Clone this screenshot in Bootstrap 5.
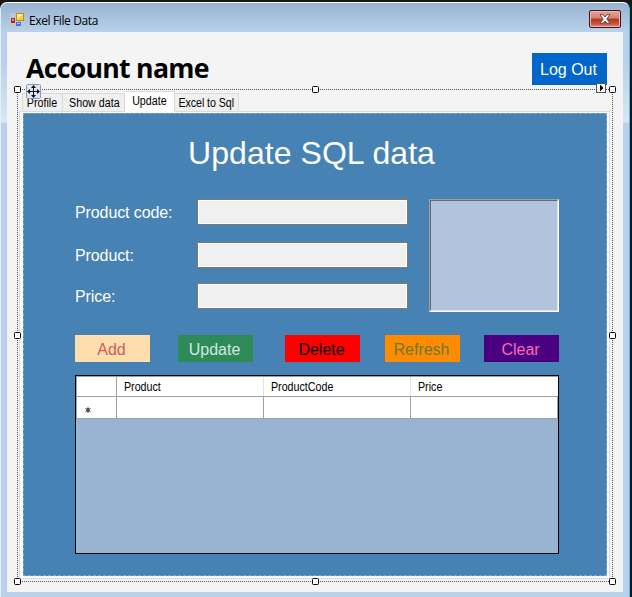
<!DOCTYPE html>
<html lang="en">
<head>
<meta charset="utf-8">
<title>Exel File Data</title>
<link rel="stylesheet" href="https://cdn.jsdelivr.net/npm/bootstrap@5.3.0/dist/css/bootstrap.min.css">
<style>
html,body{height:597px;overflow:hidden}
body{background:#171717;font-family:"Liberation Sans",Arial,sans-serif;font-size:16px;line-height:18px;padding:2px 2px 0 0}
.win{height:595px;width:630px;border-radius:7px 7px 0 0;border-top:1px solid #fff;border-right:1px solid #4cc3dc;border-left:1px solid #e4eef8;
 background:linear-gradient(#98b3d1,#b9d1ea 29px,#b9d1ea 60px,#d9e7f5 119px,#b9d1ea 120px,#b9d1ea);padding:0 6px 5px}
.titlebar{height:29px;padding:0 2px 0 3px}
.caption-text{font:12px/16px "Open Sans","Noto Sans",sans-serif;color:#000;margin:6px 0 0 5px;letter-spacing:-.38px}
.closer{width:32px;height:18px;padding:0;border:1px solid #43141a;border-radius:2px;margin-top:7px;
 background:linear-gradient(#e6a495,#d5816f 45%,#b5331c 50%,#c4553e 80%,#d99280);box-shadow:inset 0 0 0 1px #e9b9ad;line-height:0}
.client{height:560px;background:#f4f4f4;padding:21px 16px 0 10px}
.acct{font:bold 26.67px/30px "Open Sans","Noto Sans",sans-serif;color:#000;margin-left:9px;letter-spacing:-.72px}
.logout{width:75px;height:32px;background:#0066cc;color:#fff;line-height:34px;padding:0 2px 0 0}
.logout:hover{background:#0066cc;color:#fff}
.designer{width:596px;height:493px;margin-top:4px;padding:2px 3px 0 2px}
.tabs-row{height:20px;padding-left:3px;font-size:12px;color:#000}
.tab-item{height:18px;line-height:19px;background:#f0f0f0;border:1px solid #d9d9d9;border-width:1px 1px 0 0;text-align:center;white-space:nowrap}
.tab-item.first{width:41px;border-left-width:1px}
.tab-item.show{width:62px;padding-left:1px}
.tab-item.excel{width:64px;letter-spacing:-.08px}
.tab-item.on{width:50px;height:21px;background:#fff;line-height:19px;margin-bottom:-1px;position:relative}
.tab-item span,.gridhead span{display:inline-block;white-space:nowrap}
.pageframe{width:591px;height:468px;border:1px solid #dcdcdc;background:#fff;padding:1px 2px 2px 3px}
.page{width:584px;height:463px;background:#4682b4;border:1px dashed #78a9d2;color:#fff;padding:20px 47px 0 51px}
.heading{font-size:32px;line-height:38px;font-weight:400;margin:0 0 0 10px;text-align:center;height:65px;width:453px;letter-spacing:.05px}
.field-row{height:26px}
.field-row label{width:122px;letter-spacing:-.1px;padding-top:2px}
.fields{width:333px;display:grid;grid-template-rows:43px 41px 29px}
.box{width:211px;height:26px;border:1px solid #7a7a7a;border-radius:0;background:#f0f0f0;box-shadow:inset 0 0 0 1px #fff;padding:0 4px}
.pic{width:130px;height:113px;border:1px solid;border-color:#a0a0a0 #fff #fff #a0a0a0;background:#b0c4de}
.pic>div{height:111px;border:1px solid;border-color:#696969 #e3e3e3 #e3e3e3 #696969}
.actions{height:27px;margin-top:23px;display:grid;grid-template-columns:103px 107px 100px 99px 75px}
.actions button{height:27px;width:75px;padding:2px 2px 0 0;border:0;font-size:16px;line-height:26px}
.b-add{background:#ffdead;color:#cd5c5c}
.b-upd{background:#2e8b57;color:#d3e6e4}
.b-del{background:#f00;color:#000}
.b-ref{background:#ff8c00;color:#6b7a2c}
.b-clr{background:#4b0082;color:#ff69b4}
.datagrid{width:484px;height:179px;margin-top:13px;border:1px solid #000;background:#99b4d1;color:#000}
.gridhead,.gridline{display:grid;grid-template-columns:41px 147px 147px 147px;background:#fff}
.gridhead{height:21px;border-top:1px solid #a0a0a0;border-bottom:1px solid #a0a0a0;font-size:12px;line-height:21px}
.gridhead>div{height:19px;border-right:1px solid #e3e3e3;padding-left:7px}
.gridhead>div:first-child,.gridline>div{border-right:1px solid #a0a0a0}
.gridhead>div:first-child,.gridline>div:first-child{border-left:1px solid #a0a0a0}
.gridhead>div:last-child{border-right-color:#fff}
.gridline{height:22px;border-bottom:1px solid #a0a0a0}
.ttx{transform-origin:0 50%;transform:scaleX(.89)}
.tab-item .ttx{transform-origin:50% 50%}
.adorn{left:0;top:0;pointer-events:none}
</style>
</head>
<body>
<main class="win">
 <header class="titlebar d-flex justify-content-between">
  <div class="d-flex align-items-center">
   <svg width="14" height="14" viewBox="0 0 14 14" class="mt-1"><rect width="14" height="14" fill="#bcc8d4"/><rect x="6.500" y=".5" width="7" height="7" fill="#ffcf45" stroke="#c08c18"/><path d="M7 1h6L7 6z" fill="#ffeba0"/><rect x="1" y="5" width="4" height="5" fill="#b3261a"/><rect x="2" y="6" width="2" height="2" fill="#e58a78"/><rect x="6" y="9" width="5" height="4" fill="#3f78d8"/><rect x="7" y="10" width="3" height="1" fill="#9cc8fb"/></svg>
   <span class="caption-text">Exel File Data</span>
  </div>
  <button class="closer" aria-label="Close"><svg width="12" height="10" viewBox="0 0 12 10"><path d="M1 .7h3L6 3l2-2.300h3L7.800 5 11 9.300H8L6 7 4 9.300H1L4.200 5z" fill="#f5f5f5" stroke="#4d4550" stroke-width=".9"/></svg></button>
 </header>
 <section class="client">
  <div class="d-flex justify-content-between">
   <h1 class="acct mb-0">Account name</h1>
   <button class="logout btn rounded-0 border-0">Log Out</button>
  </div>
  <div class="designer">
   <nav class="tabs-row d-flex align-items-end">
    <div class="tab-item first"><span class="ttx">Profile</span></div>
    <div class="tab-item show"><span class="ttx">Show data</span></div>
    <div class="tab-item on"><span class="ttx">Update</span></div>
    <div class="tab-item excel"><span class="ttx">Excel to Sql</span></div>
   </nav>
   <div class="pageframe">
    <div class="page">
     <h2 class="heading">Update SQL data</h2>
     <div class="d-flex justify-content-between">
      <div class="fields">
       <div class="field-row d-flex align-items-center"><label for="code">Product code:</label><input id="code" class="box"></div>
       <div class="field-row d-flex align-items-center"><label for="prod">Product:</label><input id="prod" class="box"></div>
       <div class="field-row d-flex align-items-center"><label for="price">Price:</label><input id="price" class="box"></div>
      </div>
      <div class="pic"><div></div></div>
     </div>
     <div class="actions">
      <button class="b-add">Add</button><button class="b-upd">Update</button><button class="b-del">Delete</button><button class="b-ref">Refresh</button><button class="b-clr">Clear</button>
     </div>
     <div class="datagrid">
      <div class="gridhead"><div></div><div><span class="ttx">Product</span></div><div><span class="ttx">ProductCode</span></div><div><span class="ttx">Price</span></div></div>
      <div class="gridline"><div class="d-flex align-items-center ps-2 pt-1"><svg width="6" height="6" viewBox="0 0 6 6"><circle cx="3" cy="3" r="1.900" fill="#404040"/><path d="M3 0v6M.4 1.500l5.200 3M5.600 1.500l-5.200 3" stroke="#555"/></svg></div><div></div><div></div><div></div></div>
     </div>
    </div>
   </div>
  </div>
 </section>
</main>
<svg class="adorn position-absolute" width="632" height="597" viewBox="0 0 632 597">
 <path d="M18 89.500H612M18 581.500H612M17.500 90V581M612.500 90V581" stroke="#555" stroke-dasharray="1 1" fill="none"/>
 <g fill="#fff" stroke="#000"><rect x="14.500" y="86.500" width="6" height="6" rx="1"/><rect x="312.500" y="86.500" width="6" height="6" rx="1"/><rect x="609.500" y="86.500" width="6" height="6" rx="1"/><rect x="14.500" y="332.500" width="6" height="6" rx="1"/><rect x="609.500" y="332.500" width="6" height="6" rx="1"/><rect x="14.500" y="578.500" width="6" height="6" rx="1"/><rect x="312.500" y="578.500" width="6" height="6" rx="1"/><rect x="609.500" y="578.500" width="6" height="6" rx="1"/></g>
 <rect x="26.500" y="84.500" width="14" height="14" rx="1" fill="#dce6f4" stroke="#8c9cb4"/>
 <path d="M33.500 87v9M29 91.500h9" stroke="#111"/><path d="M33.500 85l2.500 3h-5zM33.500 98l2.500-3h-5zM27 91.500l3-2.500v5zM40 91.500l-3-2.500v5z" fill="#111"/>
 <rect x="596.500" y="83.500" width="9" height="9" fill="#fff" stroke="#555"/><path d="M600 84.500v7l3.500-3.500z" fill="#000"/>
</svg>
<script src="https://cdn.jsdelivr.net/npm/bootstrap@5.3.0/dist/js/bootstrap.bundle.min.js"></script>
</body>
</html>
